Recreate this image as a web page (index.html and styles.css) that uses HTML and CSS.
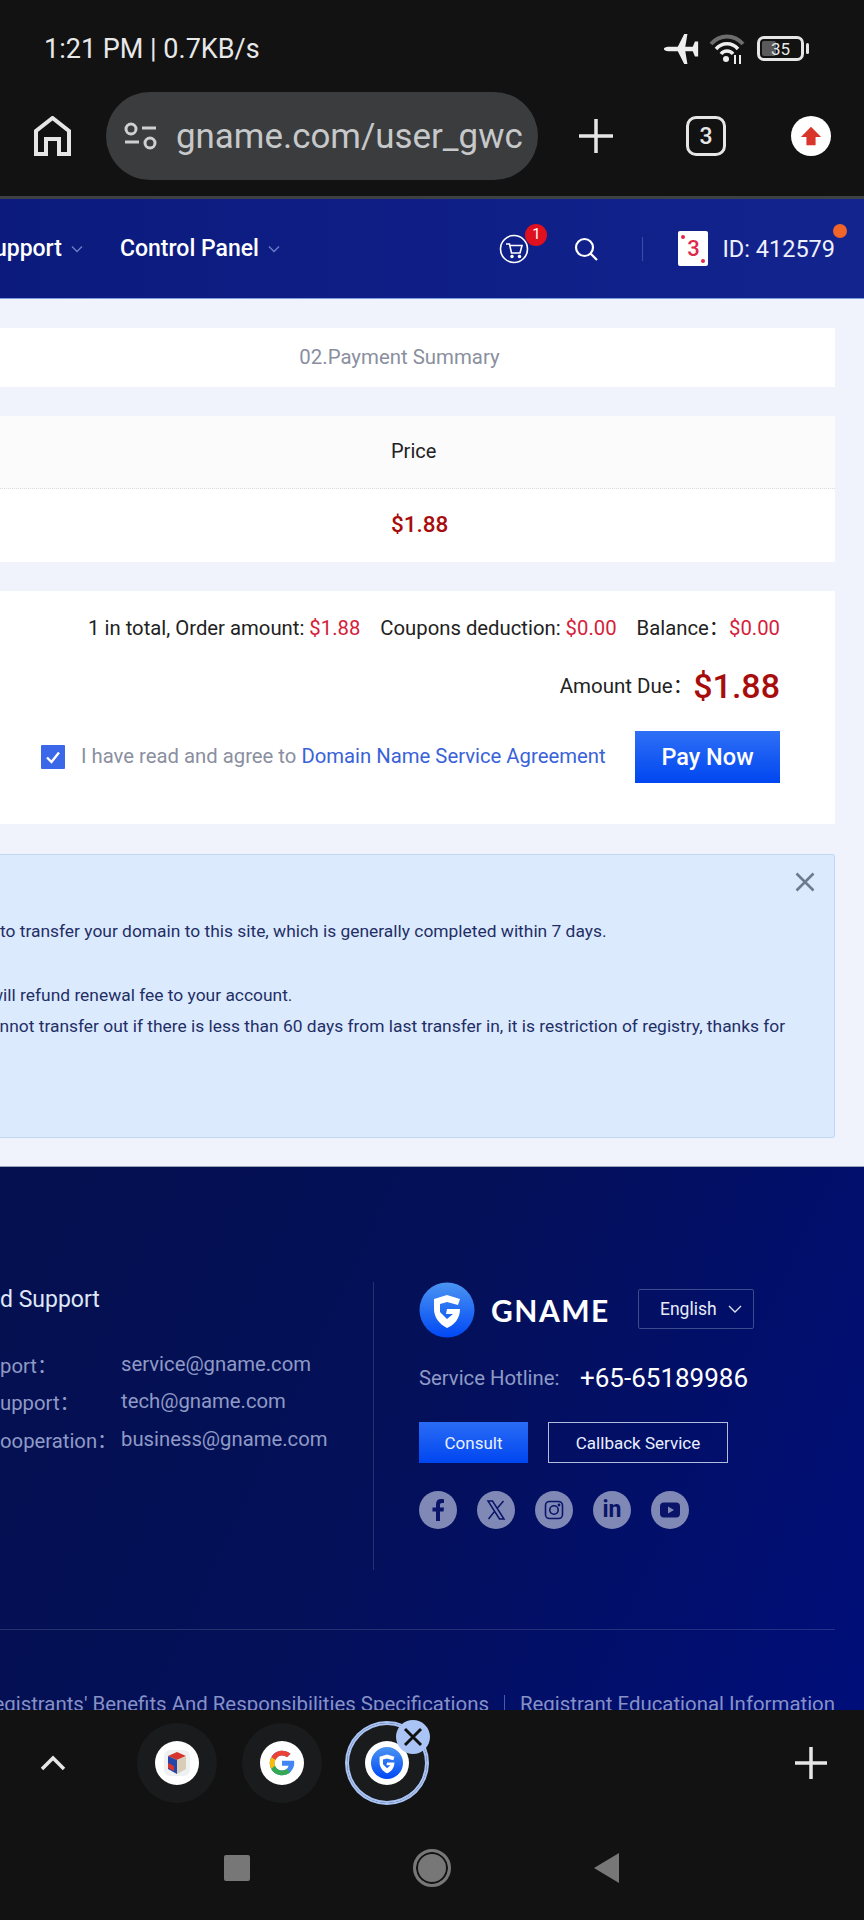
FILE: index.html
```html
<!DOCTYPE html>
<html lang="en">
<head>
  <meta charset="UTF-8">
  <meta name="viewport" content="width=device-width, initial-scale=1.0">
  <title>GNAME Payment Summary</title>
  <link rel="stylesheet" href="styles.css">
</head>
<body>
  <div class="phone">
    <header class="chrome-top">
      <div class="status-bar">
        <span class="status-time">1:21 PM | 0.7KB/s</span>
        <div class="status-icons">
          <svg class="ic-plane" viewBox="0 0 32 28"><path d="M0 14C0 13 2 12 4 12H13L19 0H22L20 12H27L29 7H32V21H29L27 16H20L22 28H19L13 16H4C2 16 0 15 0 14Z" fill="#eee"/></svg>
          <svg class="ic-wifi" viewBox="0 0 36 32" fill="none">
            <path d="M2 11C11 1 25 1 34 11" stroke="#6d6d6d" stroke-width="4"/>
            <path d="M7 16C13 9 23 9 29 16" stroke="#eee" stroke-width="3.500"/>
            <path d="M12 21C15 17 21 17 24 21" stroke="#eee" stroke-width="3.500"/>
            <circle cx="17" cy="26" r="3" fill="#eee"/>
            <path d="M26 22v9M31 22v9" stroke="#eee" stroke-width="2"/>
          </svg>
          <div class="battery">
            <div class="battery-body">
              <div class="battery-fill"></div>
              <span class="battery-num">35</span>
            </div>
            <div class="battery-tip"></div>
          </div>
        </div>
      </div>
      <div class="toolbar">
        <svg class="ic-home" viewBox="0 0 37 40" fill="none"><path d="M2 38V15L18.500 2 35 15V38H25V23H12V38Z" stroke="#e6e6e6" stroke-width="4"/></svg>
        <div class="url-pill">
          <svg class="ic-tune" viewBox="0 0 33 28" fill="none" stroke="#d0d0d0" stroke-width="3">
            <circle cx="7" cy="7" r="5"/>
            <path d="M18 6H32M1 20H15"/>
            <circle cx="26" cy="21" r="5"/>
          </svg>
          <span class="url-text">gname.com/user_gwc</span>
        </div>
        <svg class="ic-plus" viewBox="0 0 36 36"><path d="M18 1V35M1 18H35" stroke="#e6e6e6" stroke-width="3.500"/></svg>
        <div class="tab-count">3</div>
        <div class="upload-btn">
          <svg viewBox="0 0 24 24" width="22" height="22"><path d="M12 2L23 13H17V22H7V13H1Z" fill="#d9362b"/></svg>
        </div>
      </div>
    </header>

    <nav class="site-nav">
      <div class="nav-left">
        <span class="nav-item nav-cut">Support</span>
        <svg class="nav-caret" viewBox="0 0 12 8" fill="none"><path d="M1 1.500L6 6.500 11 1.500" stroke="#6d80c8" stroke-width="1.300"/></svg>
        <span class="nav-item nav-panel">Control Panel</span>
        <svg class="nav-caret" viewBox="0 0 12 8" fill="none"><path d="M1 1.500L6 6.500 11 1.500" stroke="#6d80c8" stroke-width="1.300"/></svg>
      </div>
      <div class="nav-right">
        <div class="cart">
          <svg viewBox="0 0 30 30" width="30" height="30" fill="none" stroke="#fff" stroke-width="1.600">
            <circle cx="15" cy="15" r="13.500"/>
            <path d="M7 10H10.500L12.500 19H21L23 11.500H11"/>
            <circle cx="13" cy="22.500" r="1" fill="#fff"/>
            <circle cx="20.500" cy="22.500" r="1" fill="#fff"/>
          </svg>
          <span class="cart-badge">1</span>
        </div>
        <svg class="ic-search" viewBox="0 0 24 24" fill="none" stroke="#fff" stroke-width="2.200"><circle cx="10.500" cy="10.500" r="8.500"/><path d="M16.500 16.500L23 23"/></svg>
        <span class="nav-divider"></span>
        <div class="avatar-card"><i class="pip pip-a"></i>3<i class="pip pip-b"></i></div>
        <span class="user-id">ID: 412579</span>
        <span class="user-dot"></span>
      </div>
    </nav>

    <main class="content">
      <div class="step-card">02.Payment Summary</div>

      <div class="price-table">
        <div class="price-head">Price</div>
        <div class="price-row">$1.88</div>
      </div>

      <section class="summary">
        <div class="sum-line">
          <span>1 in total, Order amount: <em>$1.88</em></span>
          <span>Coupons deduction: <em>$0.00</em></span>
          <span>Balance：<em>$0.00</em></span>
        </div>
        <div class="due-line">
          <span class="due-label">Amount Due：</span>
          <strong class="due-value">$1.88</strong>
        </div>
        <div class="agree-line">
          <span class="checkbox">
            <svg viewBox="0 0 24 24" width="24" height="24" fill="none"><path d="M6 12.500L10.500 17 18 7.500" stroke="#fff" stroke-width="2.400"/></svg>
          </span>
          <span class="agree-text">I have read and agree to <a class="agree-link">Domain Name Service Agreement</a></span>
          <button class="pay-btn">Pay Now</button>
        </div>
      </section>

      <section class="notice">
        <svg class="notice-close" viewBox="0 0 20 20" fill="none"><path d="M1.500 1.500L18.500 18.500M18.500 1.500L1.500 18.500" stroke="#6c7b8e" stroke-width="2.600"/></svg>
        <p>to transfer your domain to this site, which is generally completed within 7 days.</p>
        <p class="notice-gap cut-will">will refund renewal fee to your account.</p>
        <p class="cut-cannot">cannot transfer out if there is less than 60 days from last transfer in, it is restriction of registry, thanks for</p>
      </section>
    </main>

    <footer class="footer">
      <div class="footer-main">
        <div class="support">
          <h3 class="support-title">d Support</h3>
          <div class="support-grid">
            <span>port：</span><span>service@gname.com</span>
            <span>upport：</span><span>tech@gname.com</span>
            <span>ooperation：</span><span>business@gname.com</span>
          </div>
        </div>
        <div class="brand">
          <div class="brand-top">
            <svg class="brand-logo" viewBox="0 0 56 56">
              <defs>
                <linearGradient id="gl" x1="0" y1="0" x2="0" y2="1"><stop offset="0" stop-color="#4a94f2"/><stop offset="1" stop-color="#0048f5"/></linearGradient>
              </defs>
              <circle cx="28" cy="28" r="27.500" fill="url(#gl)"/>
              <path d="M15 17L28 13 41 17 39 23 28 20 21 22V30L28 37 34 32H27L28 27H41C41 37 35 43 28 46 20 42 15 35 15 27Z" fill="#fff"/>
            </svg>
            <span class="brand-name">GNAME</span>
            <div class="lang-select">
              English
              <svg viewBox="0 0 14 8" width="14" height="8" fill="none"><path d="M1 1L7 7 13 1" stroke="#dfe6f8" stroke-width="1.300"/></svg>
            </div>
          </div>
          <div class="hotline">
            <span class="hotline-label">Service Hotline:</span>
            <span class="hotline-num">+65-65189986</span>
          </div>
          <div class="foot-btns">
            <button class="consult-btn">Consult</button>
            <button class="callback-btn">Callback Service</button>
          </div>
          <div class="socials">
            <span class="social"><svg viewBox="0 0 38 38"><path d="M21 30V20.500H24.500L25 16.500H21V14C21 12.800 21.500 12 23 12H25V8.300C24.300 8.200 23.200 8 22 8 19 8 17 9.800 17 13.300V16.500H13.500V20.500H17V30Z" fill="#0a1468"/></svg></span>
            <span class="social"><svg viewBox="0 0 38 38" fill="none"><path d="M11 10H15.500L27 28H22.500ZM26.500 10L20 17.500M17.500 20.500L11.500 28" stroke="#0a1468" stroke-width="1.500"/></svg></span>
            <span class="social"><svg viewBox="0 0 38 38" fill="none" stroke="#0a1468" stroke-width="1.600"><rect x="10.500" y="10.500" width="17" height="17" rx="4"/><circle cx="19" cy="19" r="4.200"/><circle cx="24" cy="14" r=".6" fill="#0a1468"/></svg></span>
            <span class="social social-in">in</span>
            <span class="social"><svg viewBox="0 0 38 38"><rect x="9" y="11.500" width="20" height="15" rx="4" fill="#0a1468"/><path d="M17 15.500L23 19 17 22.500Z" fill="#8088b5"/></svg></span>
          </div>
        </div>
      </div>
      <div class="footer-links">
        <span class="link-cut">Registrants' Benefits And Responsibilities Specifications</span>
        <span class="link-sep"></span>
        <span>Registrant Educational Information</span>
      </div>
    </footer>

    <div class="chrome-bottom">
      <div class="tab-strip">
        <svg class="ic-chevron" viewBox="0 0 26 16" fill="none"><path d="M2 14L13 3 24 14" stroke="#e6e6e6" stroke-width="3.500"/></svg>
        <div class="tab-bubble">
          <span class="favicon">
            <svg viewBox="0 0 28 28" width="28" height="28">
              <rect x="1" y="1" width="26" height="26" rx="6" fill="#eef0f2"/>
              <path d="M5 7L14 3 23 7 14 11Z" fill="#d8342e"/>
              <path d="M5 7L14 11V25L5 20Z" fill="#2346a8"/>
              <path d="M23 7L14 11V25L23 20Z" fill="#d9cdb8"/>
              <path d="M5 14L11 17V22L5 19Z" fill="#d8342e"/>
            </svg>
          </span>
        </div>
        <div class="tab-bubble">
          <span class="favicon">
            <svg viewBox="0 0 48 48" width="28" height="28">
              <path d="M43.600 20H24v8.500h11.300C34 33.500 29.600 37 24 37c-7.200 0-13-5.800-13-13s5.800-13 13-13c3.300 0 6.300 1.200 8.600 3.300l6-6C34.800 4.900 29.700 3 24 3 12.400 3 3 12.400 3 24s9.400 21 21 21 21-9.400 21-21c0-1.400-.2-2.700-.4-4z" fill="#4285f4"/>
              <path d="M6 14l7 5c1.900-4.700 6.200-8 11-8 3.300 0 6.300 1.200 8.600 3.300l6-6C34.800 4.900 29.700 3 24 3 16 3 9.400 7.400 6 14z" fill="#ea4335"/>
              <path d="M24 45c5.500 0 10.500-1.800 14.200-5.200l-6.600-5.400C29.600 36 27 37 24 37c-5.600 0-10.100-3.500-11.700-8.500l-7 5.300C8.700 40.500 15.800 45 24 45z" fill="#34a853"/>
              <path d="M6 14c-1.900 3-3 6.400-3 10s1 7 2.300 9.800l7-5.300c-.8-1.400-1.300-2.900-1.300-4.500s.8-3.500 2-5z" fill="#fbbc05"/>
            </svg>
          </span>
        </div>
        <div class="tab-bubble tab-active">
          <span class="favicon">
            <svg viewBox="0 0 56 56" width="32" height="32">
              <circle cx="28" cy="28" r="28" fill="url(#gl)"/>
              <path d="M15 17L28 13 41 17 39 23 28 20 21 22V30L28 37 34 32H27L28 27H41C41 37 35 43 28 46 20 42 15 35 15 27Z" fill="#fff"/>
            </svg>
          </span>
          <span class="tab-close">
            <svg viewBox="0 0 20 20" width="20" height="20" fill="none"><path d="M2 2L18 18M18 2L2 18" stroke="#111" stroke-width="3"/></svg>
          </span>
        </div>
        <svg class="ic-plus-sm" viewBox="0 0 32 32"><path d="M16 0V32M0 16H32" stroke="#e6e6e6" stroke-width="3.500"/></svg>
      </div>
      <div class="sys-nav">
        <span class="sys-square"></span>
        <span class="sys-circle"></span>
        <span class="sys-back"></span>
      </div>
    </div>
  </div>
</body>
</html>
```

FILE: styles.css
```css
:root {
  --chrome: #121212;
  --page: #f0f3fb;
  --red: #a80d0d;
  --red-light: #d5203a;
  --footer-text: #8f9ac6;
}

* {
  box-sizing: border-box;
}

body {
  margin: 0;
  background: var(--chrome);
  font-family: Roboto, "Noto Sans CJK SC", sans-serif;
}

.phone {
  width: 864px;
  height: 1920px;
  display: flex;
  flex-direction: column;
  overflow: hidden;
  background: var(--page);
}

/* browser chrome, top */
.chrome-top {
  height: 199px;
  flex: none;
  background: var(--chrome);
  border-bottom: 3px solid #3e4144;
}

.status-bar {
  height: 92px;
  padding: 5px 55px 0 44px;
  display: flex;
  align-items: center;
  justify-content: space-between;
}

.status-time {
  font-size: 27px;
  color: #e8e8e8;
}

.status-icons {
  display: flex;
  align-items: center;
}

.ic-plane {
  width: 36px;
  height: 30px;
}

.ic-wifi {
  width: 36px;
  height: 32px;
  margin-left: 10px;
}

.battery {
  display: flex;
  align-items: center;
  margin-left: 12px;
}

.battery-body {
  position: relative;
  width: 47px;
  height: 25px;
  border: 3px solid #e6e6e6;
  border-radius: 7px;
  display: flex;
  align-items: center;
  justify-content: center;
}

.battery-fill {
  position: absolute;
  left: 2px;
  top: 2px;
  bottom: 2px;
  width: 14px;
  background: #5a5a5a;
  border-radius: 2px;
}

.battery-num {
  position: relative;
  font-size: 17px;
  color: #e6e6e6;
}

.battery-tip {
  width: 3px;
  height: 11px;
  margin-left: 2px;
  background: #e6e6e6;
  border-radius: 2px;
}

.toolbar {
  height: 88px;
  padding-left: 34px;
  display: flex;
  align-items: center;
}

.ic-home {
  width: 37px;
  height: 40px;
}

.url-pill {
  width: 432px;
  height: 88px;
  margin-left: 35px;
  padding-left: 18px;
  border-radius: 44px;
  background: #3a3c3e;
  display: flex;
  align-items: center;
  overflow: hidden;
}

.ic-tune {
  width: 33px;
  height: 28px;
  flex: none;
}

.url-text {
  margin-left: 19px;
  font-size: 34.900px;
  color: #c6c8ca;
  white-space: nowrap;
}

.ic-plus {
  width: 36px;
  height: 36px;
  margin-left: 40px;
}

.tab-count {
  width: 40px;
  height: 40px;
  margin-left: 72px;
  border: 3px solid #e6e6e6;
  border-radius: 10px;
  display: flex;
  align-items: center;
  justify-content: center;
  font-size: 23px;
  font-weight: 500;
  color: #e6e6e6;
}

.upload-btn {
  width: 40px;
  height: 40px;
  margin-left: 65px;
  border-radius: 50%;
  background: #fff;
  display: flex;
  align-items: center;
  justify-content: center;
}

/* site nav */
.site-nav {
  height: 100px;
  flex: none;
  background: linear-gradient(90deg, #0b1a7c 0%, #0f1f88 55%, #14248e 100%);
  border-bottom: 1px solid #7f9be0;
  display: flex;
  align-items: center;
  justify-content: space-between;
  overflow: hidden;
}

.nav-left,
.nav-right {
  display: flex;
  align-items: center;
}

.nav-item {
  font-size: 23px;
  font-weight: 500;
  color: #fff;
  white-space: nowrap;
}

.nav-cut {
  margin-left: -20px;
}

.nav-panel {
  margin-left: 37px;
}

.nav-caret {
  width: 12px;
  height: 8px;
  margin-left: 9px;
}

.nav-right {
  padding-right: 29px;
}

.cart {
  position: relative;
  width: 30px;
  height: 30px;
}

.cart-badge {
  position: absolute;
  left: 26px;
  top: -10px;
  width: 22px;
  height: 22px;
  border-radius: 50%;
  background: #e0101f;
  color: #fff;
  font-size: 15px;
  text-align: center;
  line-height: 20px;
}

.ic-search {
  width: 24px;
  height: 24px;
  margin-left: 45px;
}

.nav-divider {
  width: 1px;
  height: 24px;
  margin-left: 44px;
  background: #3a4ea8;
}

.avatar-card {
  position: relative;
  width: 30px;
  height: 35px;
  margin-left: 35px;
  border-radius: 2px;
  background: #fff;
  color: #e0284a;
  font-size: 22px;
  font-weight: 500;
  text-align: center;
  line-height: 35px;
}

.pip {
  position: absolute;
  width: 4px;
  height: 4px;
  border-radius: 50%;
  background: #e0284a;
}

.pip-a {
  left: 3px;
  top: 4px;
}

.pip-b {
  right: 3px;
  bottom: 3px;
}

.user-id {
  margin-left: 14px;
  font-size: 23.500px;
  color: #eef1fb;
  white-space: nowrap;
}

.user-dot {
  position: absolute;
  left: 833px;
  top: 224px;
  width: 14px;
  height: 14px;
  border-radius: 50%;
  background: #f2652a;
}

/* main content */
.content {
  flex: none;
  height: 867px;
  width: 835px;
  padding-top: 29px;
}

.step-card {
  height: 59px;
  background: #fff;
  font-size: 20.400px;
  color: #8a8f9f;
  display: flex;
  align-items: center;
  justify-content: center;
  padding: 0 36px 2px 0;
}

.price-table {
  margin-top: 29px;
}

.price-head,
.price-row {
  padding: 0 0 3px 391px;
  display: flex;
  align-items: center;
}

.price-head {
  height: 73px;
  background: #fbfbfc;
  border-bottom: 1px dotted #dcdcdc;
  font-size: 20px;
  color: #222;
}

.price-row {
  height: 73px;
  background: #fff;
  font-size: 22.500px;
  font-weight: 500;
  color: var(--red);
}

.summary {
  height: 233px;
  margin-top: 29px;
  padding: 25px 55px 0 41px;
  background: #fff;
}

.sum-line {
  height: 24px;
  display: flex;
  justify-content: flex-end;
  gap: 20px;
  font-size: 20.300px;
  line-height: 24px;
  color: #222;
}

.sum-line em {
  font-style: normal;
  color: var(--red-light);
}

.due-line {
  height: 40px;
  margin-top: 26px;
  display: flex;
  align-items: center;
  justify-content: flex-end;
  font-size: 20.500px;
  color: #222;
}

.due-label {
  padding-bottom: 4px;
}

.due-value {
  font-size: 34px;
  font-weight: 500;
  color: var(--red);
}

.agree-line {
  height: 52px;
  margin-top: 25px;
  display: flex;
  align-items: center;
}

.checkbox {
  width: 24px;
  height: 24px;
  background: #3b68e8;
  border-radius: 1px;
}

.agree-text {
  margin-left: 16px;
  margin-top: -2px;
  font-size: 20.300px;
  color: #8a8f9f;
  white-space: nowrap;
}

.agree-link {
  color: #3a62d8;
}

.pay-btn {
  width: 145px;
  height: 52px;
  margin-left: auto;
  border: 0;
  background: linear-gradient(180deg, #2f70f6 0%, #0046f0 100%);
  color: #fff;
  font-family: inherit;
  font-size: 23.500px;
  font-weight: 500;
}

.notice {
  position: relative;
  height: 284px;
  margin-top: 30px;
  padding-top: 61px;
  background: #dceafe;
  border: 1px solid #bcd8f5;
  border-left: 0;
  border-radius: 0 3px 3px 0;
  overflow: hidden;
  color: #1f2f66;
}

.notice p {
  margin: 0;
  font-size: 17.400px;
  line-height: 31px;
  white-space: nowrap;
}

.notice .notice-gap {
  margin-top: 33px;
}

.notice .cut-will {
  margin-left: -10px;
}

.notice .cut-cannot {
  margin-left: -19px;
}

.notice-close {
  position: absolute;
  right: 19px;
  top: 17px;
  width: 20px;
  height: 20px;
}

/* footer */
.footer {
  height: 544px;
  flex: none;
  background: linear-gradient(115deg, #04104f 0%, #041058 45%, #000e7a 100%);
  overflow: hidden;
  border-top: 1px solid #9aa6b8;
}

.footer-main {
  height: 463px;
  padding-top: 115px;
  border-bottom: 1px solid rgba(255, 255, 255, 0.14);
  width: 835px;
  display: flex;
}

.support {
  width: 374px;
  height: 288px;
  border-right: 1px solid rgba(255, 255, 255, 0.14);
}

.support-title {
  margin: 2px 0 0;
  height: 32px;
  font-size: 23px;
  font-weight: 400;
  line-height: 32px;
  color: #dfe6f8;
}

.support-grid {
  margin-top: 29px;
  display: grid;
  grid-template-columns: 121px auto;
  grid-auto-rows: 37.500px;
  align-items: center;
  font-size: 20.300px;
  color: var(--footer-text);
  white-space: nowrap;
}

.brand {
  margin-left: 45px;
  display: flex;
  flex-direction: column;
}

.brand-top {
  display: flex;
  align-items: center;
  height: 56px;
}

.brand-logo {
  width: 56px;
  height: 56px;
}

.brand-name {
  margin-left: 16px;
  width: 147px;
  font-family: Lato, sans-serif;
  font-size: 30px;
  font-weight: 700;
  letter-spacing: 1.500px;
  color: #fff;
}

.lang-select {
  width: 116px;
  height: 40px;
  margin-top: -3px;
  padding-left: 21px;
  border: 1px solid #3c4a8e;
  border-radius: 2px;
  display: flex;
  align-items: center;
  gap: 11px;
  font-size: 17.500px;
  color: #e6eaf8;
}

.hotline {
  margin-top: 22px;
  display: flex;
  align-items: center;
  height: 36px;
}

.hotline-label {
  width: 161px;
  font-size: 20.300px;
  color: var(--footer-text);
}

.hotline-num {
  font-size: 26px;
  color: #fff;
}

.foot-btns {
  margin-top: 26px;
  display: flex;
  gap: 20px;
}

.consult-btn,
.callback-btn {
  height: 41px;
  font-family: inherit;
  font-size: 17px;
  color: #eaf0ff;
}

.consult-btn {
  width: 109px;
  border: 0;
  background: linear-gradient(180deg, #2a6cf6 0%, #0046f0 100%);
}

.callback-btn {
  width: 180px;
  border: 1px solid #b4bcdc;
  background: transparent;
}

.socials {
  margin-top: 28px;
  display: flex;
  gap: 20px;
}

.social {
  width: 38px;
  height: 38px;
  border-radius: 50%;
  background: #8088b5;
}

.social svg {
  display: block;
  width: 38px;
  height: 38px;
}

.social-in {
  font-size: 23px;
  font-weight: 700;
  color: #0a1468;
  text-align: center;
  line-height: 38px;
}

.footer-links {
  width: 835px;
  margin-top: 62px;
  display: flex;
  align-items: center;
  justify-content: flex-end;
  font-size: 20.400px;
  line-height: 24px;
  color: #8791c6;
  white-space: nowrap;
}

.link-sep {
  width: 1px;
  height: 18px;
  margin: 0 15px;
  flex: none;
  background: #4a5aa8;
}

/* browser chrome, bottom */
.chrome-bottom {
  height: 210px;
  flex: none;
  background: var(--chrome);
  position: relative;
}

.tab-strip {
  height: 106px;
  display: flex;
  align-items: center;
  padding-left: 40px;
}

.ic-chevron {
  width: 26px;
  height: 16px;
}

.tab-bubble {
  position: relative;
  width: 80px;
  height: 80px;
  margin-left: 25px;
  border-radius: 50%;
  background: #1a1b1c;
  display: flex;
  align-items: center;
  justify-content: center;
}

.tab-bubble:first-of-type {
  margin-left: 71px;
}

.tab-active {
  box-shadow: 0 0 0 2px #a9c4f5, inset 0 0 0 2px #a9c4f5;
}

.favicon {
  width: 44px;
  height: 44px;
  border-radius: 50%;
  background: #fff;
  display: flex;
  align-items: center;
  justify-content: center;
}

.tab-close {
  position: absolute;
  right: -3px;
  top: -3px;
  width: 34px;
  height: 34px;
  border-radius: 50%;
  background: #a9c4f5;
  display: flex;
  align-items: center;
  justify-content: center;
}

.ic-plus-sm {
  width: 32px;
  height: 32px;
  margin-left: auto;
  margin-right: 37px;
}

.sys-nav {
  height: 104px;
  padding-left: 224px;
  display: flex;
  align-items: center;
}

.sys-square {
  width: 26px;
  height: 26px;
  border-radius: 2px;
  background: #777;
}

.sys-circle {
  width: 38px;
  height: 38px;
  margin-left: 163px;
  border-radius: 50%;
  border: 3px solid #777;
  background: #777;
  box-shadow: inset 0 0 0 2px var(--chrome);
}

.sys-back {
  width: 0;
  height: 0;
  margin-left: 143px;
  border-top: 15px solid transparent;
  border-bottom: 15px solid transparent;
  border-right: 25px solid #777;
}
```
